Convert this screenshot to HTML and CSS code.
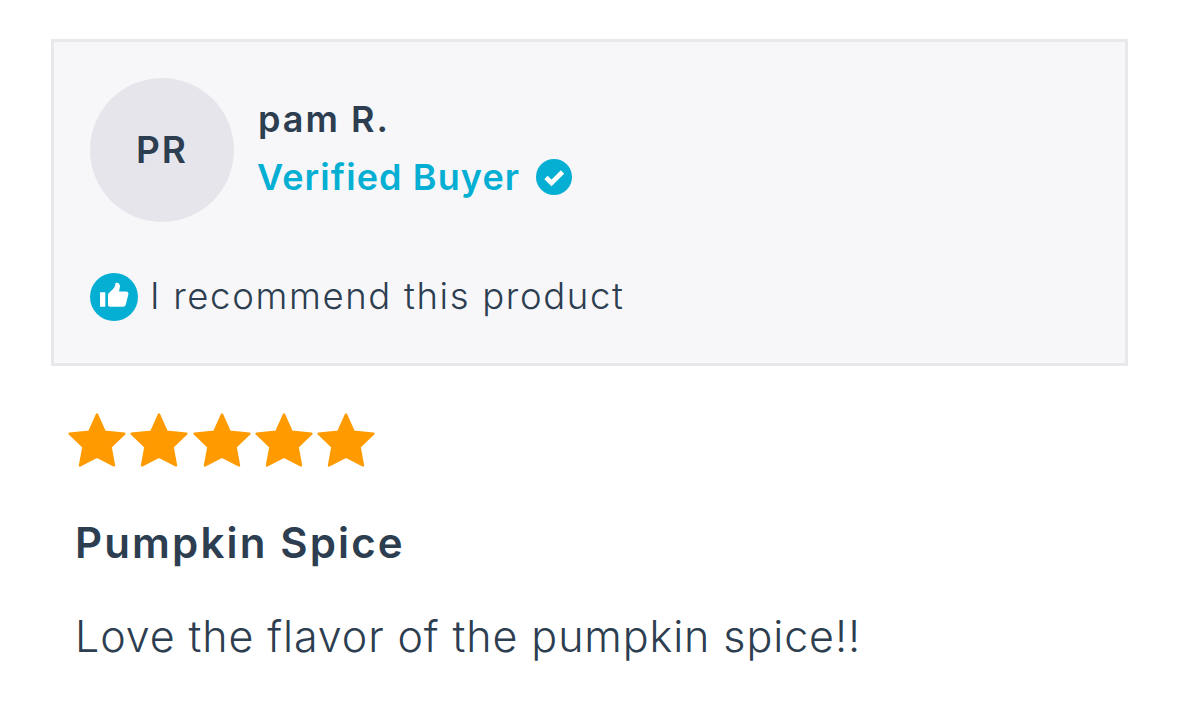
FILE: index.html
```html
<!DOCTYPE html>
<html lang="en">
<head>
<meta charset="utf-8">
<title>Review</title>
<link rel="stylesheet" href="styles.css">
</head>
<body>
<main class="review">
  <section class="card">
    <div class="author">
      <div class="avatar">PR</div>
      <div class="author-info">
        <div class="name">pam R.</div>
        <div class="verified">
          <span class="verified-text">Verified Buyer</span>
          <svg class="check" viewBox="0 0 36 36" aria-hidden="true"><circle cx="18" cy="18" r="18" fill="#05afd3"/><path d="M10 18.500l5.500 5.500L26.500 13" fill="none" stroke="#fff" stroke-width="4.600"/></svg>
        </div>
      </div>
    </div>
    <div class="recommend">
      <svg class="thumb" viewBox="0 0 48 48" aria-hidden="true"><circle cx="24" cy="24" r="24" fill="#05afd3"/><path fill="#fff" d="M10 19.300h5.300v14.400H10zM18 21l5.500-5.500c1.500-1.500 1.500-3.500 2-5.500 2.500-1 4.500 1 4.500 3.500l-1 5H36c2 0 2.800 1.500 2.300 3l-2.500 10c-.4 1.500-1.300 2.200-2.800 2.200H20c-1.200 0-2-.7-2-1.700z"/></svg>
      <span class="recommend-text">I recommend this product</span>
    </div>
  </section>
  <div class="stars" aria-label="5 stars">
    <svg class="star" viewBox="0 0 58 54"><use href="#s"/></svg>
    <svg class="star" viewBox="0 0 58 54"><use href="#s"/></svg>
    <svg class="star" viewBox="0 0 58 54"><use href="#s"/></svg>
    <svg class="star" viewBox="0 0 58 54"><use href="#s"/></svg>
    <svg class="star" viewBox="0 0 58 54"><use href="#s"/></svg>
  </div>
  <h2 class="title">Pumpkin Spice</h2>
  <p class="body-text">Love the flavor of the pumpkin spice!!</p>
</main>
<svg class="defs" aria-hidden="true"><defs><path id="s" fill="#ff9b00" stroke="#ff9b00" stroke-width="2.400" stroke-linejoin="round" d="M29 1.600L36.600 18.600 56.400 20.600 42.600 34 46 52.400 29 43.600 12 52.400 15.400 34 1.600 20.600 21.400 18.600z"/></defs></svg>
</body>
</html>
```
FILE: styles.css
```css
* { box-sizing: border-box; }
html, body { margin: 0; background: #fff; }
body { font-family: "Inter", "Open Sans", "Liberation Sans", sans-serif; color: #2c3e50; }
.review { padding: 39px 51px 0; }
.card {
  height: 327px;
  background: #f7f7fa;
  border: 3px solid #e7e7ec;
  padding: 36px 36px 0;
}
.author { display: flex; align-items: center; gap: 24px; }
.avatar {
  width: 144px; height: 144px; border-radius: 50%;
  background: #e5e5eb;
  display: flex; align-items: center; justify-content: center;
  font-size: 37px; font-weight: 600; letter-spacing: 2px; padding-bottom: 2px;
}
.author-info { display: flex; flex-direction: column; gap: 13px; padding-bottom: 4px; }
.name { font-size: 36px; font-weight: 600; line-height: 44px; letter-spacing: 2px; }
.verified { display: flex; align-items: center; gap: 16px; color: #05afd3; line-height: 46px; margin-left: -1px; }
.verified-text { font-size: 36px; font-weight: 600; letter-spacing: 1.1px; }
.check { width: 36px; height: 36px; }
.recommend { display: flex; align-items: center; gap: 12px; margin-top: 51px; }
.thumb { width: 48px; height: 48px; flex: none; }
.recommend-text { font-size: 36.500px; font-weight: 300; letter-spacing: 1.650px; position: relative; top: -1px; }
.stars { display: flex; gap: 4.300px; margin: 47px 0 0 17px; height: 54px; }
.star { width: 58px; height: 54px; display: block; }
.title { margin: 0 0 0 24px; padding-top: 51px; font-size: 42px; font-weight: 600; line-height: 50px; letter-spacing: 2.150px; }
.body-text { margin: 43px 0 0 24px; font-size: 43px; font-weight: 300; line-height: 50px; letter-spacing: 0.9px; }
.defs { width: 0; height: 0; position: absolute; }
```
